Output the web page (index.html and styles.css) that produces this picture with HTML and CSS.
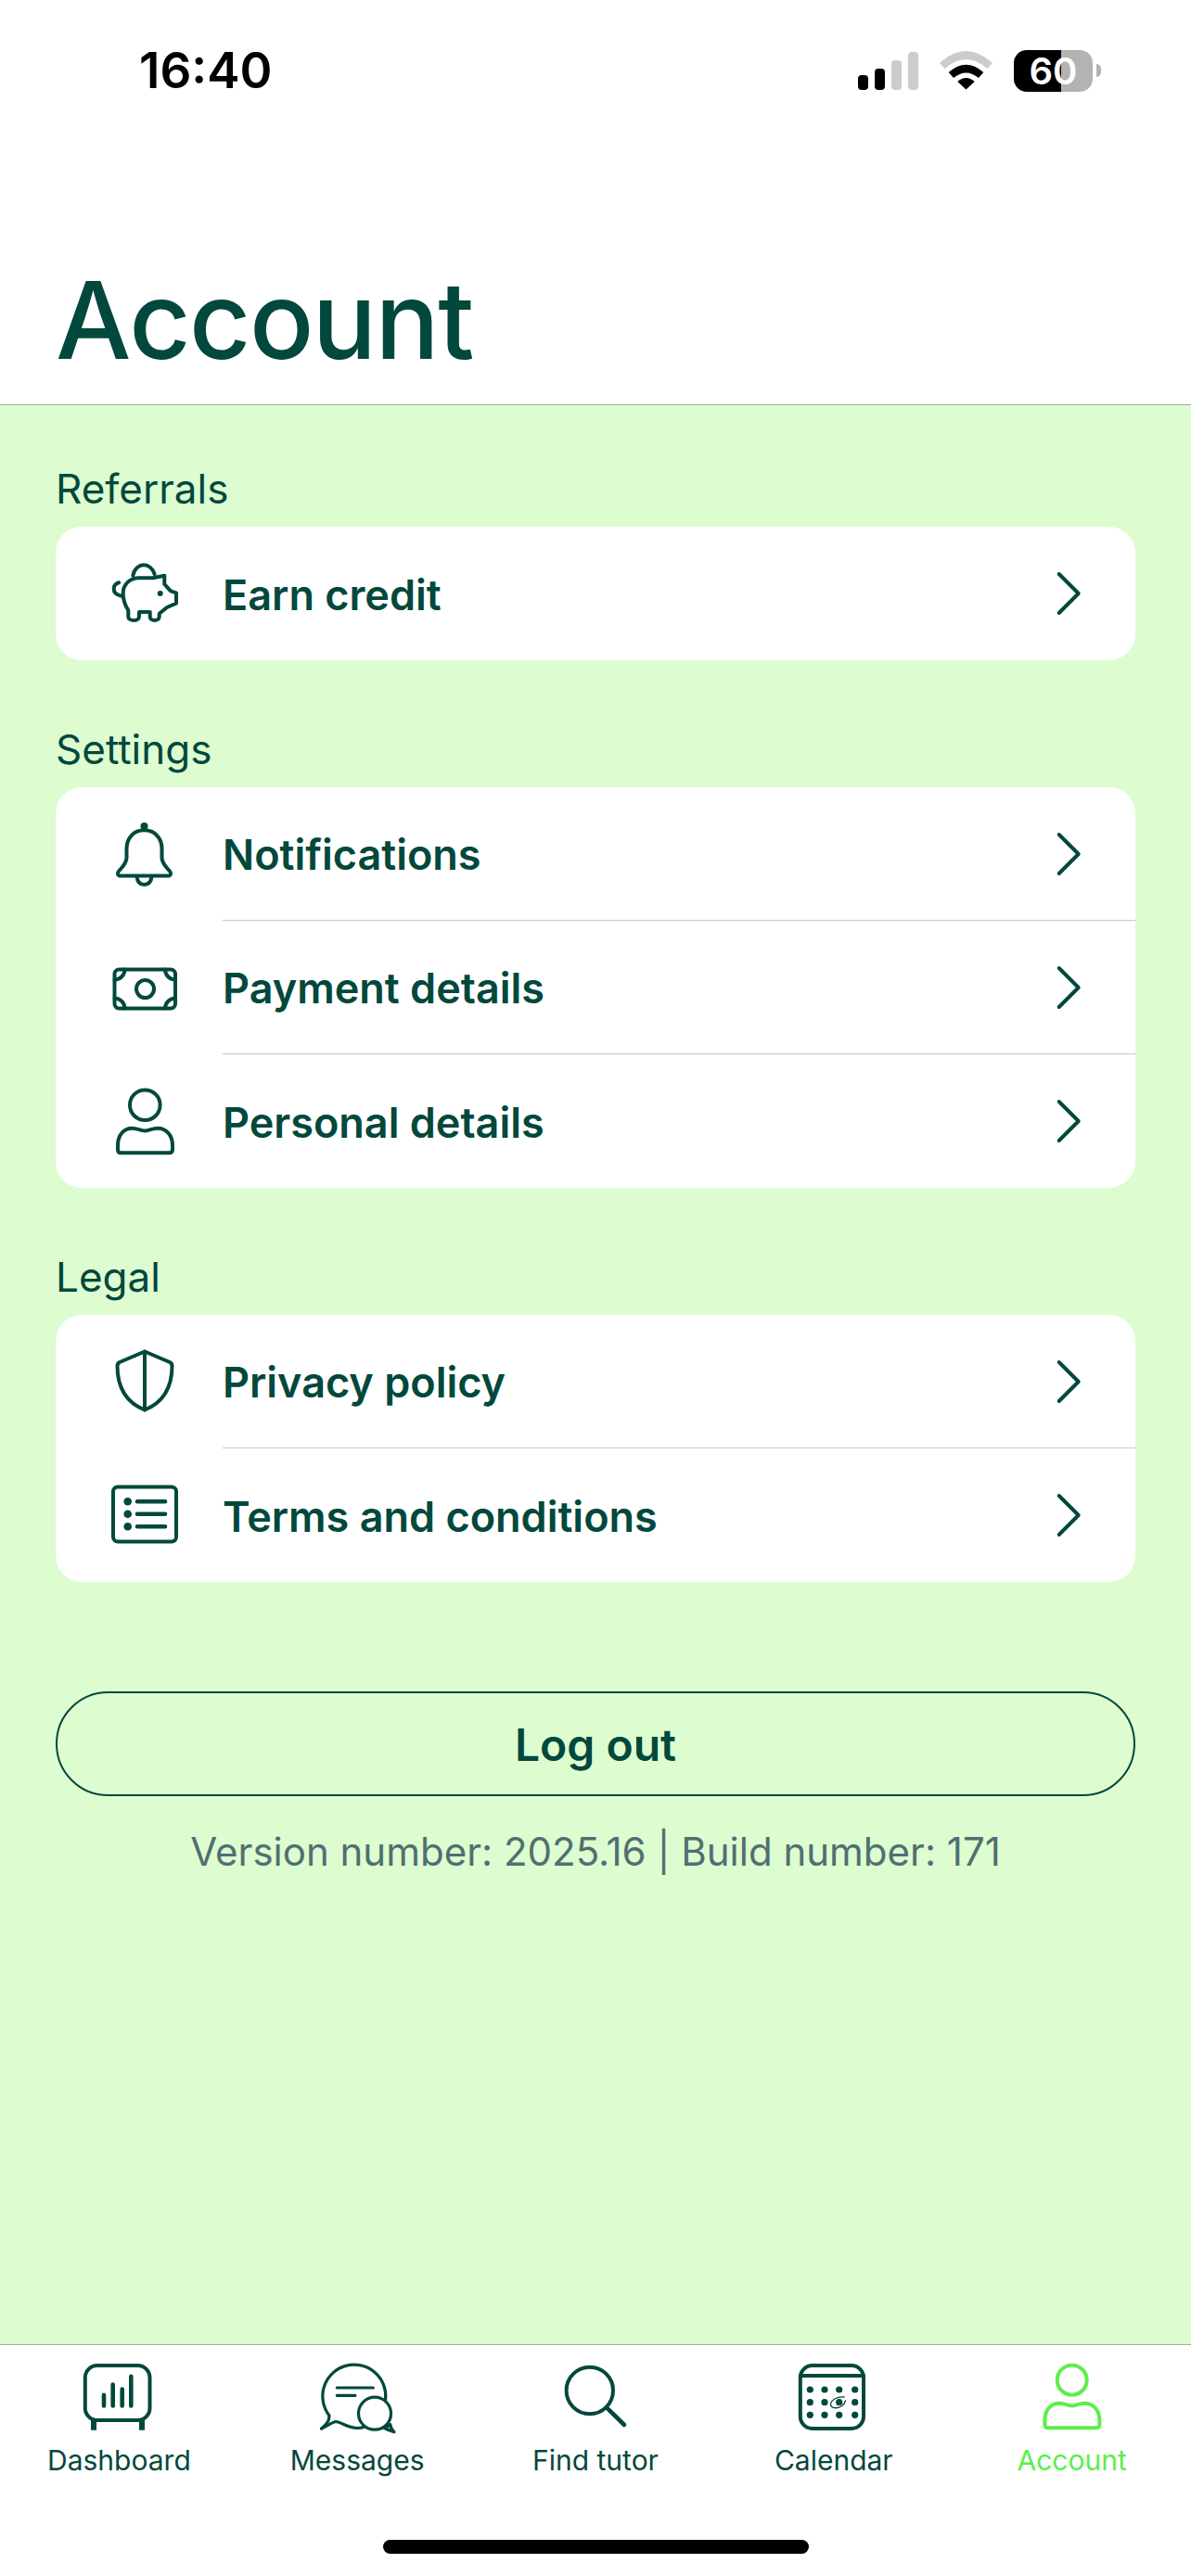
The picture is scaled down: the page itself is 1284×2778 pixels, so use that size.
FILE: index.html
```html
<!DOCTYPE html>
<html lang="en">
<head>
    <meta charset="UTF-8">
    <meta name="viewport" content="width=device-width, initial-scale=1.0">
    <title>Account</title>
    <link rel="stylesheet" href="styles.css">
</head>
<body>
    <header class="header">
        <div class="status-bar">
            <span class="time">16:40</span>
            <div class="status-icons">
                <svg width="65" height="41" viewBox="0 0 65 41">
                    <rect x="0" y="25" width="11" height="16" rx="4" fill="#000"/>
                    <rect x="18" y="18" width="11" height="23" rx="4" fill="#000"/>
                    <rect x="36" y="9" width="11" height="32" rx="4" fill="#ccc"/>
                    <rect x="54" y="0" width="11" height="41" rx="4" fill="#ccc"/>
                </svg>
                <svg width="57" height="42" viewBox="0 0 57 42">
                    <path d="M0 13Q28.5 -13 57 13L51.3 19Q28.5 -1 5.7 19Z" fill="#ccc"/>
                    <path d="M9.7 23Q28.5 6.4 47.3 23L42 29Q28.5 17.8 15 29Z" fill="#000"/>
                    <path d="M19.3 33Q28.5 25 37.7 33L28.5 41.5Z" fill="#000"/>
                </svg>
                <div class="battery">60</div>
            </div>
        </div>
        <h1 class="page-title">Account</h1>
    </header>

    <main class="content">
        <section class="group">
            <h2 class="group-title">Referrals</h2>
            <div class="card">
                <a class="row">
                    <svg class="icon row-icon" viewBox="0 0 72 72">
                        <path d="M23.3 16.7C25 8 31 5.3 35 5.3C40 5.3 45 9 46.7 15.3"/>
                        <path d="M12.7 36C12.7 26 20 19.3 30 19.3H45L57.3 16.7V26L64 33.3L70 35.3V46.7L60 51L51.7 57.7V61C51.7 63.5 49.5 65 46.7 65C44 65 41.7 63.5 41.7 61V56H30V61C30 63.5 27 65 24 65C21 65 18.3 63.5 18.3 61V54.3C15 49 12.7 43 12.7 36Z"/>
                        <path d="M8.3 24.3C4 25.5 2.7 28 2.7 31C2.7 35 6 37.8 11 38.7"/>
                        <circle class="solid" cx="52.7" cy="36" r="3"/>
                    </svg>
                    <div class="row-body">
                        <span class="row-label">Earn credit</span>
                        <svg class="icon chevron" viewBox="0 0 30 48"><path d="M5.7 3L26.7 24L5.7 45"/></svg>
                    </div>
                </a>
            </div>
        </section>

        <section class="group">
            <h2 class="group-title">Settings</h2>
            <div class="card">
                <a class="row">
                    <svg class="icon row-icon" viewBox="0 0 72 72">
                        <circle class="solid" cx="35.5" cy="6" r="4"/>
                        <path d="M35.5 10.3C24 10.3 16.5 19 16.5 30V40C16.5 46 12 50 8 54.5C6 57 7 59.5 10 59.5H61C64 59.5 65 57 63 54.5C59 50 54.5 46 54.5 40V30C54.5 19 47 10.3 35.5 10.3Z"/>
                        <path d="M27.5 60C28 66 31 69 35.5 69C40 69 43 66 43.5 60"/>
                    </svg>
                    <div class="row-body">
                        <span class="row-label">Notifications</span>
                        <svg class="icon chevron" viewBox="0 0 30 48"><path d="M5.7 3L26.7 24L5.7 45"/></svg>
                    </div>
                </a>
                <a class="row">
                    <svg class="icon row-icon" viewBox="0 0 72 72">
                        <rect x="3.5" y="16.5" width="65.5" height="42" rx="5"/>
                        <circle cx="36.5" cy="37.5" r="9.5"/>
                        <path d="M3.5 27.5A11 11 0 0 0 14.5 16.5"/>
                        <path d="M58 16.5A11 11 0 0 0 69 27.5"/>
                        <path d="M3.5 47.5A11 11 0 0 1 14.5 58.5"/>
                        <path d="M58 58.5A11 11 0 0 1 69 47.5"/>
                    </svg>
                    <div class="row-body">
                        <span class="row-label">Payment details</span>
                        <svg class="icon chevron" viewBox="0 0 30 48"><path d="M5.7 3L26.7 24L5.7 45"/></svg>
                    </div>
                </a>
                <a class="row">
                    <svg class="icon row-icon" viewBox="0 0 72 72">
                        <circle cx="36.3" cy="18.7" r="16.3"/>
                        <path d="M10 70.3H62.5C65 70.3 66 69 66 66.5V62C66 51 59 43.7 50 43.7C44 43.7 41 46.5 36.3 46.5C31.6 46.5 28 43.7 22.5 43.7C13.5 43.7 7 51 7 62V66.5C7 69 8 70.3 10 70.3Z"/>
                    </svg>
                    <div class="row-body">
                        <span class="row-label">Personal details</span>
                        <svg class="icon chevron" viewBox="0 0 30 48"><path d="M5.7 3L26.7 24L5.7 45"/></svg>
                    </div>
                </a>
            </div>
        </section>

        <section class="group">
            <h2 class="group-title">Legal</h2>
            <div class="card">
                <a class="row">
                    <svg class="icon row-icon" viewBox="0 0 72 72">
                        <path d="M36 3.5L9 15C7 16 6.5 17 6.5 19C6.5 40 15 58 36 66.5C57 58 65.5 40 65.5 19C65.5 17 65 16 63 15Z"/>
                        <path d="M36 3.5V66.5"/>
                    </svg>
                    <div class="row-body">
                        <span class="row-label">Privacy policy</span>
                        <svg class="icon chevron" viewBox="0 0 30 48"><path d="M5.7 3L26.7 24L5.7 45"/></svg>
                    </div>
                </a>
                <a class="row">
                    <svg class="icon row-icon" viewBox="0 0 72 72">
                        <rect x="2" y="5.5" width="68" height="59" rx="5"/>
                        <circle class="solid" cx="17.7" cy="21.3" r="4.3"/>
                        <circle class="solid" cx="17.7" cy="34.7" r="4.3"/>
                        <circle class="solid" cx="17.7" cy="48.3" r="4.3"/>
                        <path class="thick" d="M28 21.3H58M28 34.7H58M28 48.3H58"/>
                    </svg>
                    <div class="row-body">
                        <span class="row-label">Terms and conditions</span>
                        <svg class="icon chevron" viewBox="0 0 30 48"><path d="M5.7 3L26.7 24L5.7 45"/></svg>
                    </div>
                </a>
            </div>
        </section>

        <button class="logout">Log out</button>
        <p class="version">Version number: 2025.16 | Build number: 171</p>
    </main>

    <footer class="tab-area">
        <nav class="tab-bar">
            <a class="tab">
                <svg class="icon tab-icon" viewBox="0 0 80 80">
                    <rect x="3.8" y="7" width="69.7" height="59" rx="13"/>
                    <rect class="solid" x="10" y="66" width="6" height="10.7"/>
                    <rect class="solid" x="62" y="66" width="6" height="10.7"/>
                    <path class="thick" d="M24 38.9V50.5M33.7 27.5V50.5M43.7 32.5V50.5M53.3 18.9V50.5"/>
                </svg>
                <span>Dashboard</span>
            </a>
            <a class="tab">
                <svg class="icon tab-icon" viewBox="0 0 80 80">
                    <path class="thin" d="M1.5 75C6 71 10 68 10 61A34 34 0 1 1 70.6 44"/>
                    <path class="thin" d="M1.5 75C7 73 13 68 17 67.5C23 68 30 74.5 40 74.5C43 74.5 46 74 48.5 73"/>
                    <path class="thin" d="M18.3 31H57.3M18.3 39.3H38"/>
                    <circle class="thin" cx="59" cy="58.7" r="17.5"/>
                    <path class="thin" d="M68.5 74C72 73.5 74 72.5 75.7 70.5C76 74 78 77 80 78.7C76 77.5 72 76 68.5 74Z"/>
                </svg>
                <span>Messages</span>
            </a>
            <a class="tab">
                <svg class="icon tab-icon" viewBox="0 0 80 80">
                    <circle cx="33.8" cy="34" r="25.2"/>
                    <path class="thick" d="M53 53.3L71 71"/>
                </svg>
                <span>Find tutor</span>
            </a>
            <a class="tab">
                <svg class="icon tab-icon" viewBox="0 0 80 80">
                    <rect x="3.8" y="7" width="68.2" height="68" rx="13"/>
                    <path d="M3.8 18H72"/>
                    <g class="solid">
                        <circle cx="14.3" cy="33" r="3.6"/><circle cx="30" cy="33" r="3.6"/><circle cx="45.7" cy="33" r="3.6"/><circle cx="62.7" cy="33" r="3.6"/>
                        <circle cx="14.3" cy="46.7" r="3.6"/><circle cx="30" cy="46.7" r="3.6"/><circle cx="45.7" cy="46.7" r="3.6"/><circle cx="62.7" cy="46.7" r="3.6"/>
                        <circle cx="14.3" cy="60.3" r="3.6"/><circle cx="30" cy="60.3" r="3.6"/><circle cx="45.7" cy="60.3" r="3.6"/><circle cx="62.7" cy="60.3" r="3.6"/>
                    </g>
                    <path class="hair" d="M51 41C44 40 37 44 36.5 49C36.5 53 43 54 48 51C50.5 49.5 52 47 52.5 45"/>
                </svg>
                <span>Calendar</span>
            </a>
            <a class="tab tab-active">
                <svg class="icon tab-icon" viewBox="0 0 80 80">
                    <circle cx="39.7" cy="22.7" r="16"/>
                    <path d="M13.4 74.3H65.9C68.4 74.3 69.4 73 69.4 70.5V66C69.4 55 62.4 47.7 53.4 47.7C47.4 47.7 44.4 50.5 39.7 50.5C35 50.5 31.4 47.7 25.9 47.7C16.9 47.7 10.4 55 10.4 66V70.5C10.4 73 11.4 74.3 13.4 74.3Z"/>
                </svg>
                <span>Account</span>
            </a>
        </nav>
        <div class="home-indicator"></div>
    </footer>
</body>
</html>
```

FILE: styles.css
```css
* {
    box-sizing: border-box;
}
body {
    font-family: Inter, "Noto Sans", sans-serif;
    display: flex;
    flex-direction: column;
    height: 2778px;
    margin: 0;
    background-color: #fff;
    color: #02483c;
}
.header {
    height: 437px;
    display: flex;
    flex-direction: column;
    justify-content: space-between;
    border-bottom: 1px solid #9db591;
    padding-top: 52px;
}
.status-bar {
    height: 48px;
    display: flex;
    justify-content: space-between;
    align-items: center;
    padding: 0 97px 0 150px;
}
.time {
    font-size: 53px;
    line-height: 48px;
    font-weight: 600;
    color: #000;
}
.status-icons {
    display: flex;
    align-items: center;
    gap: 23px;
}
.battery {
    position: relative;
    width: 85px;
    height: 45px;
    margin-right: 9px;
    border-radius: 14px;
    background: linear-gradient(90deg, #000 60%, #b3b3b3 60%);
    color: #fff;
    font-size: 40px;
    font-weight: 600;
    line-height: 45px;
    text-align: center;
}
.battery::after {
    content: "";
    position: absolute;
    right: -9px;
    top: 15px;
    width: 5px;
    height: 14px;
    border-radius: 0 7px 7px 0;
    background-color: #b3b3b3;
}
.page-title {
    margin: 0;
    padding: 0 0 25px 60px;
    font-size: 115px;
    line-height: 130px;
    font-weight: 500;
    letter-spacing: -1.5px;
}
.content {
    flex: 1;
    background-color: #ddfcd0;
    padding: 64px 60px 0;
}
.group {
    margin-bottom: 70px;
}
.group-title {
    margin: 0 0 15px;
    font-size: 44px;
    line-height: 52px;
    font-weight: 400;
}
.card {
    background-color: #fff;
    border-radius: 28px;
    overflow: hidden;
}
.row {
    display: flex;
    align-items: stretch;
    padding-left: 60px;
}
.row-icon {
    width: 72px;
    height: 72px;
    margin: auto 48px auto 0;
}
.row-body {
    flex: 1;
    height: 144px;
    display: flex;
    justify-content: space-between;
    align-items: center;
    padding-right: 58px;
    border-bottom: 1px solid #c9c9c9;
}
.row:last-child .row-body {
    border-bottom: none;
}
.row-label {
    padding-top: 2px;
    font-size: 45px;
    font-weight: 600;
}
.chevron {
    width: 30px;
    height: 48px;
}
.icon {
    flex-shrink: 0;
    overflow: visible;
    fill: none;
    stroke: currentColor;
    stroke-width: 4;
    stroke-linecap: round;
    stroke-linejoin: round;
}
.icon .solid {
    fill: currentColor;
    stroke: none;
}
.icon .thick {
    stroke-width: 4.6;
}
.icon .thin {
    stroke-width: 3.2;
    fill: none;
}
.icon circle.thin {
    fill: #fff;
}
.icon .hair {
    stroke-width: 1.3;
}
.logout {
    display: block;
    width: 100%;
    height: 113px;
    margin-top: 118px;
    padding-top: 3px;
    border: 2px solid #02483c;
    border-radius: 57px;
    background: none;
    color: #02483c;
    font-family: inherit;
    font-size: 48px;
    font-weight: 600;
}
.version {
    margin: 32px 0 0;
    font-size: 42px;
    line-height: 56px;
    text-align: center;
    color: #4f7070;
}
.group:nth-of-type(3) {
    margin-bottom: 0;
}
.tab-area {
    border-top: 1px solid #9db591;
    padding-top: 15px;
}
.tab-bar {
    display: grid;
    grid-template-columns: repeat(5, 1fr);
}
.tab {
    display: flex;
    flex-direction: column;
    align-items: center;
    gap: 11px;
    font-size: 30px;
    line-height: 36px;
}
.tab-icon {
    width: 80px;
    height: 80px;
}
.tab-active {
    color: #5bef4b;
}
.home-indicator {
    width: 459px;
    height: 15px;
    margin: 68px auto 24px;
    border-radius: 8px;
    background-color: #000;
}
```
